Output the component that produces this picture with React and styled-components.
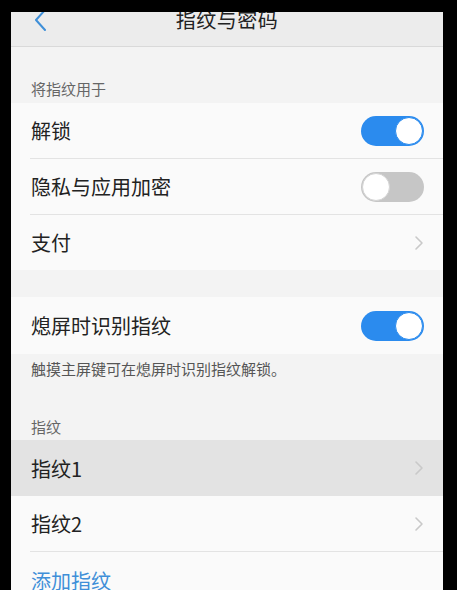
import React from 'react';
import styled, { createGlobalStyle } from 'styled-components';

const GlobalStyle = createGlobalStyle`
  html, body {
    margin: 0;
    padding: 0;
    background: #000;
  }
  body {
    font-family: "Noto Sans CJK SC", "Noto Sans", sans-serif;
    -webkit-font-smoothing: antialiased;
  }
`;

const Frame = styled.div`
  height: 590px;
  padding: 12px 14px 0 11px;
  box-sizing: border-box;
  overflow: hidden;
  background: #000;
`;

const Screen = styled.div`
  height: 100%;
  background: #f3f3f3;
  overflow: hidden;
`;

const NavBar = styled.div`
  height: 34px;
  display: flex;
  align-items: flex-start;
  justify-content: center;
  position: relative;
  background: #ececec;
  border-bottom: 1px solid #d9d9d9;
  overflow: hidden;
`;

const BackButton = styled.button`
  position: absolute;
  left: 22px;
  top: -4px;
  background: none;
  border: none;
  padding: 0;
  cursor: pointer;
  color: #3f8fd8;
`;

const Title = styled.div`
  margin-top: -3px;
  font-size: 20px;
  line-height: 22px;
  color: #222;
  letter-spacing: 0.5px;
`;

const SectionLabel = styled.div`
  padding: ${(p) => p.$top}px 20px ${(p) => p.$bottom}px;
  font-size: 15px;
  line-height: 20px;
  color: #666;
`;

const Footnote = styled.div`
  padding: 5px 20px 0;
  font-size: 15px;
  line-height: 20px;
  color: #555;
`;

const Gap = styled.div`
  height: ${(p) => p.$h}px;
`;

const Group = styled.div`
  background: #fafafa;
`;

const Row = styled.div`
  height: ${(p) => p.$h || 55}px;
  display: flex;
  align-items: center;
  justify-content: space-between;
  padding: 0 19px 0 20px;
  background: ${(p) => (p.$active ? '#e3e3e3' : 'transparent')};
`;

const RowLabel = styled.span`
  font-size: 20px;
  color: ${(p) => (p.$accent ? '#3f8fd8' : '#222')};
`;

const Divider = styled.div`
  height: 1px;
  margin-left: 19px;
  background: #e3e3e3;
`;

const Track = styled.div`
  width: 63px;
  height: 30px;
  border-radius: 15px;
  box-sizing: border-box;
  display: flex;
  align-items: center;
  justify-content: ${(p) => (p.$on ? 'flex-end' : 'flex-start')};
  padding: 0 1px;
  background: ${(p) => (p.$on ? '#2b8bee' : '#c6c6c6')};
`;

const Knob = styled.div`
  width: 28px;
  height: 28px;
  border-radius: 50%;
  box-sizing: border-box;
  background: #fff;
  border: 1px solid ${(p) => (p.$on ? '#2b8bee' : '#d4d4d4')};
`;

const Toggle = ({ on }) => (
  <Track $on={on}>
    <Knob $on={on} />
  </Track>
);

const Chevron = () => (
  <svg width="10" height="16" viewBox="0 0 10 16" fill="none">
    <path d="M2 2l6 6-6 6" stroke="#c9c9c9" strokeWidth="1.6" strokeLinecap="round" strokeLinejoin="round" />
  </svg>
);

const App = () => {
  return (
    <>
      <GlobalStyle />
      <Frame>
        <Screen>
          <NavBar>
            <BackButton aria-label="back">
              <svg width="16" height="26" viewBox="0 0 16 26" fill="none">
                <path d="M12 2L3 12l9 10" stroke="currentColor" strokeWidth="2" strokeLinecap="round" strokeLinejoin="round" />
              </svg>
            </BackButton>
            <Title>指纹与密码</Title>
          </NavBar>

          <SectionLabel $top={32} $bottom={4}>将指纹用于</SectionLabel>
          <Group>
            <Row>
              <RowLabel>解锁</RowLabel>
              <Toggle on />
            </Row>
            <Divider />
            <Row>
              <RowLabel>隐私与应用加密</RowLabel>
              <Toggle on={false} />
            </Row>
            <Divider />
            <Row>
              <RowLabel>支付</RowLabel>
              <Chevron />
            </Row>
          </Group>

          <Gap $h={27} />
          <Group>
            <Row $h={57}>
              <RowLabel>熄屏时识别指纹</RowLabel>
              <Toggle on />
            </Row>
          </Group>
          <Footnote>触摸主屏键可在熄屏时识别指纹解锁。</Footnote>

          <SectionLabel $top={38} $bottom={3}>指纹</SectionLabel>
          <Group>
            <Row $h={56} $active>
              <RowLabel>指纹1</RowLabel>
              <Chevron />
            </Row>
            <Row>
              <RowLabel>指纹2</RowLabel>
              <Chevron />
            </Row>
            <Divider />
            <Row $h={56}>
              <RowLabel $accent>添加指纹</RowLabel>
            </Row>
          </Group>
        </Screen>
      </Frame>
    </>
  );
};

export default App;
